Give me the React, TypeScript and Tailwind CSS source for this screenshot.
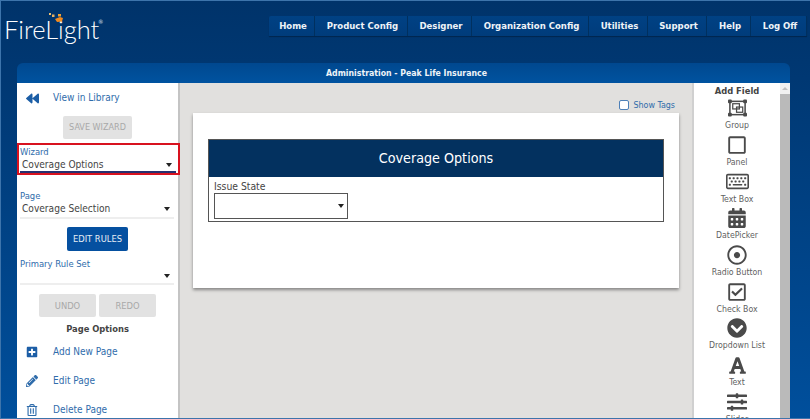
import { FC, ReactNode } from 'react';
import {
  FaBackward,
  FaCalendarAlt,
  FaChevronCircleDown,
  FaFont,
  FaPencilAlt,
  FaPlusSquare,
  FaRegCheckSquare,
  FaRegDotCircle,
  FaRegKeyboard,
  FaRegSquare,
  FaRegTrashAlt,
  FaSlidersH,
} from 'react-icons/fa';

const navItems = [
  { label: 'Home', width: 'w-[46px]' },
  { label: 'Product Config', width: 'w-[93px]' },
  { label: 'Designer', width: 'w-[64px]' },
  { label: 'Organization Config', width: 'w-[117px]' },
  { label: 'Utilities', width: 'w-[59px]' },
  { label: 'Support', width: 'w-[59px]' },
  { label: 'Help', width: 'w-[44px]' },
  { label: 'Log Off', width: 'w-[56px]' },
];

const Caret: FC = () => (
  <span className="w-0 h-0 border-x-[3.5px] border-x-transparent border-t-[4px] border-t-[#222]" />
);

const GroupIcon: FC = () => (
  <svg width="19" height="18" viewBox="0 0 20 18" fill="none" stroke="#4a4a4a">
    <rect x="2" y="2" width="16" height="14" strokeWidth="1.6" />
    <rect x="5" y="4.5" width="7" height="5.5" strokeWidth="1.3" />
    <rect x="9" y="8" width="6.5" height="5.5" strokeWidth="1.3" />
    <g fill="#4a4a4a" stroke="none">
      <rect x="0" y="0" width="4" height="4" rx="1" />
      <rect x="16" y="0" width="4" height="4" rx="1" />
      <rect x="0" y="14" width="4" height="4" rx="1" />
      <rect x="16" y="14" width="4" height="4" rx="1" />
    </g>
  </svg>
);

const FieldItem: FC<{ icon: ReactNode; label: string }> = ({ icon, label }) => (
  <div className="h-[36.7px] shrink-0 flex flex-col items-center justify-end">
    <div className="h-[22px] flex items-center justify-center text-[#4a4a4a]">{icon}</div>
    <span className="text-[8.7px] leading-[13px] text-[#5f5f5f] whitespace-nowrap">{label}</span>
  </div>
);

const ActionLink: FC<{ icon: ReactNode; label: string; className: string }> = ({ icon, label, className }) => (
  <div className={`flex items-center pl-[9px] text-[#2f6cab] ${className}`}>
    <div className="w-[27px] flex items-center">{icon}</div>
    <span className="text-[10px] leading-[14px] whitespace-nowrap">{label}</span>
  </div>
);

const Logo: FC = () => (
  <div className="relative w-[110px] h-[36px] ml-[3px] mt-[14px]">
    <svg className="absolute left-[45px] top-[-2px]" width="16" height="11" viewBox="0 0 16 11">
      <rect x="0" y="0" width="2" height="2" fill="#f0c070" />
      <rect x="3" y="1.5" width="2.5" height="2.5" fill="#e8b060" />
      <rect x="9" y="1" width="3" height="2.5" fill="#f0a030" />
      <path d="M6 6 L11 4 L14 5 L13 8.5 L8 9 Z" fill="#f08a20" />
    </svg>
    <span className="text-[25.5px] leading-[28px] font-light text-white font-['Lato',sans-serif] block">
      FireLight
    </span>
    <span className="absolute left-[94px] top-[3px] text-[6px] leading-[8px] text-[#d6e3f0]">®</span>
  </div>
);

const App: FC = () => {
  return (
    <div className="w-[810px] h-[419px] overflow-hidden flex flex-col border-t border-l border-b border-[#3d74ab] bg-gradient-to-b from-[#00336a] to-[#004f9c] font-['DejaVu_Sans_Condensed','DejaVu_Sans',sans-serif]">
      <div className="h-[62px] shrink-0 flex items-start justify-between">
        <Logo />
        <nav className="flex mt-[15px] mr-[3px] h-[20px] bg-gradient-to-b from-[#004184] to-[#003c7b] shadow-[0_1px_1px_rgba(0,0,0,0.3)] rounded-t-[2px]">
          {navItems.map((item) => (
            <div
              key={item.label}
              className={`${item.width} flex items-center justify-center pl-[3px] border-r border-[#00305f] text-[9.5px] font-bold text-[#eef3f8] whitespace-nowrap`}
            >
              {item.label}
            </div>
          ))}
        </nav>
      </div>

      <div className="flex-1 min-h-0 ml-[16px] mr-[20px] flex flex-col">
        <div className="h-[20px] shrink-0 rounded-t-[6px] bg-gradient-to-b from-[#00488f] to-[#0053a0] flex items-center justify-center pl-[6px] pt-[1px] text-[8.7px] font-bold text-[#eef3f8]">
          Administration - Peak Life Insurance
        </div>

        <div className="flex-1 min-h-0 flex bg-white">
          {/* left tools */}
          <aside className="w-[163px] shrink-0 border-r-2 border-[#c4c4c4] flex flex-col [&>*]:shrink-0">
            <ActionLink icon={<FaBackward size={13} color="#1c5ea6" />} label="View in Library" className="h-[30px]" />
            <button className="self-center mt-[3px] w-[69px] h-[23px] rounded-[2px] bg-[#e2e2e2] text-[9px] text-[#a8a8a8]">
              SAVE WIZARD
            </button>

            <div className="mt-[4px] h-[32px] border-2 border-[#d8121f] pl-[1px] pr-[2px] w-[163px] relative z-10 flex flex-col">
              <span className="text-[9.4px] leading-[10px] text-[#2f6cab] mt-[2px]">Wizard</span>
              <div className="flex items-center justify-between pl-[2px] pr-[4px] pt-[1px] h-[16px] border-b-2 border-[#27306f]">
                <span className="text-[10.1px] text-[#444]">Coverage Options</span>
                <Caret />
              </div>
            </div>

            <div className="ml-[3px] mr-[4px] mt-[15px] flex flex-col">
              <span className="text-[9.4px] leading-[11px] text-[#2f6cab]">Page</span>
              <div className="flex items-center justify-between pl-[2px] pr-[4px] h-[18px] border-b-2 border-[#eeeeee]">
                <span className="text-[10.1px] text-[#444]">Coverage Selection</span>
                <Caret />
              </div>
            </div>

            <button className="self-center mt-[8px] w-[61px] h-[24px] rounded-[2px] bg-[#0550a0] text-[9.3px] text-[#e6eef6]">
              EDIT RULES
            </button>

            <div className="ml-[3px] mr-[4px] mt-[7px] flex flex-col">
              <span className="text-[9.4px] leading-[11px] text-[#2f6cab]">Primary Rule Set</span>
              <div className="flex items-center justify-end pr-[4px] h-[16px] border-b-2 border-[#eeeeee]">
                <Caret />
              </div>
            </div>

            <div className="mt-[9px] flex justify-center gap-[3px]">
              <button className="w-[57px] h-[23px] rounded-[2px] bg-[#e2e2e2] text-[9.3px] text-[#a8a8a8]">UNDO</button>
              <button className="w-[57px] h-[23px] rounded-[2px] bg-[#e2e2e2] text-[9.3px] text-[#a8a8a8]">REDO</button>
            </div>

            <div className="mt-[5px] text-center text-[9.3px] leading-[14px] font-bold text-[#444]">Page Options</div>

            <ActionLink icon={<FaPlusSquare size={12} color="#1c5ea6" />} label="Add New Page" className="h-[29px] mt-[1px]" />
            <ActionLink icon={<FaPencilAlt size={12} color="#2f6cab" />} label="Edit Page" className="h-[29px]" />
            <ActionLink icon={<FaRegTrashAlt size={12} color="#2f6cab" />} label="Delete Page" className="h-[29px]" />
          </aside>

          {/* canvas */}
          <main className="flex-1 min-w-0 bg-[#e1e0de] flex flex-col pl-[13px] pr-[13px]">
            <div className="h-[30px] shrink-0 flex items-end justify-end pb-[3px] pr-[4px]">
              <label className="flex items-center gap-[4px]">
                <span className="w-[10px] h-[10px] rounded-[2px] border-[1.5px] border-[#4d80b8] bg-white" />
                <span className="text-[8.9px] leading-[10px] text-[#2f6cab]">Show Tags</span>
              </label>
            </div>
            <div className="h-[175px] bg-white shadow-[0_2px_3px_rgba(0,0,0,0.4)] pt-[26px] px-[15px]">
              <div className="border border-[#555] h-[83px]">
                <div className="h-[37px] bg-[#03315f] flex items-center justify-center text-[14.2px] text-white">
                  Coverage Options
                </div>
                <div className="pl-[5px] pt-[3px]">
                  <div className="text-[10.3px] leading-[13px] text-[#444]">Issue State</div>
                  <div className="w-[134px] h-[26px] border border-[#555] flex items-center justify-end pr-[3px]">
                    <Caret />
                  </div>
                </div>
              </div>
            </div>
          </main>

          {/* field palette */}
          <aside className="w-[88px] shrink-0 border-l-2 border-[#d0d0d0] flex flex-col overflow-hidden">
            <div className="shrink-0 text-center text-[9.3px] leading-[12px] font-bold text-[#444] mt-[2px]">Add Field</div>
            <div className="flex flex-col -mt-[1.5px]">
              <FieldItem icon={<GroupIcon />} label="Group" />
              <FieldItem icon={<FaRegSquare size={20} />} label="Panel" />
              <FieldItem icon={<FaRegKeyboard size={23} />} label="Text Box" />
              <FieldItem icon={<FaCalendarAlt size={20} />} label="DatePicker" />
              <FieldItem icon={<FaRegDotCircle size={20} />} label="Radio Button" />
              <FieldItem icon={<FaRegCheckSquare size={20} />} label="Check Box" />
              <FieldItem icon={<FaChevronCircleDown size={20} />} label="Dropdown List" />
              <FieldItem icon={<FaFont size={19} />} label="Text" />
              <FieldItem icon={<FaSlidersH size={20} />} label="Slider" />
            </div>
          </aside>

          {/* scrollbar */}
          <div className="w-[10px] shrink-0 bg-[#bababa] flex flex-col">
            <div className="h-[11px] bg-[#f1f1f1] flex items-center justify-center">
              <span className="w-0 h-0 border-x-[3px] border-x-transparent border-b-[3px] border-b-[#c0c0c0]" />
            </div>
          </div>
        </div>
      </div>
    </div>
  );
};

export default App;
